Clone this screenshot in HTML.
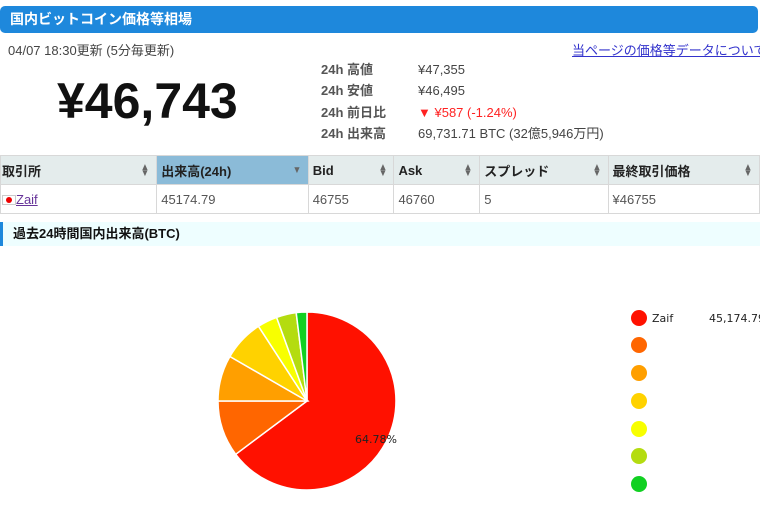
<!DOCTYPE html>
<html><head><meta charset="utf-8"><style>
*{margin:0;padding:0;box-sizing:border-box}
body{width:760px;height:512px;overflow:hidden;background:#fff;font-family:"Liberation Sans","Noto Sans CJK JP",sans-serif;color:#333;position:relative}
.a{position:absolute;white-space:nowrap}
.title{left:0;top:6px;width:758px;height:27px;background:#1e88dc;border-radius:5px;color:#fff;font-weight:bold;font-size:14px;line-height:27px;padding-left:10px}
.lab{color:#555;font-weight:bold;font-size:13px;line-height:16px}
.val{font-size:13px;color:#444;line-height:16px}
table{position:absolute;left:0;top:155px;border-collapse:collapse;font-size:13px}
th,td{border:1px solid #d8d8d8;height:29px;padding:0 4px;text-align:left}
th{background:#e4ecec;font-weight:bold;color:#222;position:relative}
th .s{position:absolute;right:6px;top:9px;font-size:10px;color:#666;line-height:6px;transform:scaleX(.9)}
td{color:#555}
</style></head><body>
<div class="a title">国内ビットコイン価格等相場</div>
<div class="a" style="left:8px;top:40px;font-size:13px;color:#444">04/07 18:30更新 (5分毎更新)</div>
<div class="a" style="left:572px;top:40px;font-size:13px;color:#33c;text-decoration:underline">当ページの価格等データについて</div>
<div class="a" style="left:57px;top:72px;font-size:50px;font-weight:bold;color:#111">¥46,743</div>
<div class="a lab" style="left:321px;top:62px">24h 高値</div>
<div class="a lab" style="left:321px;top:83px">24h 安値</div>
<div class="a lab" style="left:321px;top:105px">24h 前日比</div>
<div class="a lab" style="left:321px;top:126px">24h 出来高</div>
<div class="a val" style="left:418px;top:62px">¥47,355</div>
<div class="a val" style="left:418px;top:83px">¥46,495</div>
<div class="a val" style="left:418px;top:105px;color:#f22">▼ ¥587 (-1.24%)</div>
<div class="a val" style="left:418px;top:126px">69,731.71 BTC (32億5,946万円)</div>
<table>
<tr><th style="width:157px;padding-left:1px">取引所<span class="s">▲<br>▼</span></th><th style="width:152px;background:#8bbbd8">出来高(24h)<span class="s" style="top:12px">▼</span></th><th style="width:86px">Bid<span class="s">▲<br>▼</span></th><th style="width:86px">Ask<span class="s">▲<br>▼</span></th><th style="width:129px">スプレッド<span class="s">▲<br>▼</span></th><th style="width:152px">最終取引価格<span class="s">▲<br>▼</span></th></tr>
<tr><td style="padding-left:1px"><span style="display:inline-block;width:14px;height:10px;border:1px solid #ccc;background:#fff;vertical-align:-1px;position:relative"><span style="position:absolute;left:3px;top:1px;width:6px;height:6px;border-radius:50%;background:#e00"></span></span><span style="color:#639;text-decoration:underline">Zaif</span></td><td>45174.79</td><td>46755</td><td>46760</td><td>5</td><td>¥46755</td></tr>
</table>
<div class="a" style="left:0;top:222px;width:760px;height:24px;background:#eefeff;border-left:3px solid #1e88dc;font-size:13px;font-weight:bold;color:#111;line-height:24px;padding-left:10px">過去24時間国内出来高(BTC)</div>
<svg class="a" style="left:0;top:0" width="760" height="512">
<g stroke="#fff" stroke-width="1.5">
<path d="M307,401 L307,312 A89,89 0 1,1 235.7,454.3 Z" fill="#ff1100"/>
<path d="M307,401 L235.7,454.3 A89,89 0 0,1 218,401 Z" fill="#ff6600"/>
<path d="M307,401 L218,401 A89,89 0 0,1 229.9,356.5 Z" fill="#ff9f00"/>
<path d="M307,401 L229.9,356.5 A89,89 0 0,1 258.5,326.3 Z" fill="#ffd200"/>
<path d="M307,401 L258.5,326.3 A89,89 0 0,1 276.6,317.4 Z" fill="#f8ff00"/>
<path d="M307,401 L276.6,317.4 A89,89 0 0,1 296.2,312.6 Z" fill="#b4dc10"/>
<path d="M307,401 L296.2,312.6 A89,89 0 0,1 307,312 Z" fill="#11d022"/>
</g>
<text x="355" y="443" font-size="11" fill="#222" font-family="DejaVu Sans,sans-serif">64.78%</text>
<circle cx="639" cy="318" r="8" fill="#ff1100"/>
<circle cx="639" cy="345" r="8" fill="#ff6600"/>
<circle cx="639" cy="373" r="8" fill="#ff9f00"/>
<circle cx="639" cy="401" r="8" fill="#ffd200"/>
<circle cx="639" cy="429" r="8" fill="#f8ff00"/>
<circle cx="639" cy="456" r="8" fill="#b4dc10"/>
<circle cx="639" cy="484" r="8" fill="#11d022"/>
<text x="652" y="322" font-size="11" fill="#222" font-family="DejaVu Sans,sans-serif">Zaif</text>
<text x="709" y="322" font-size="11" fill="#222" font-family="DejaVu Sans,sans-serif">45,174.79</text>
</svg>
</body></html>
